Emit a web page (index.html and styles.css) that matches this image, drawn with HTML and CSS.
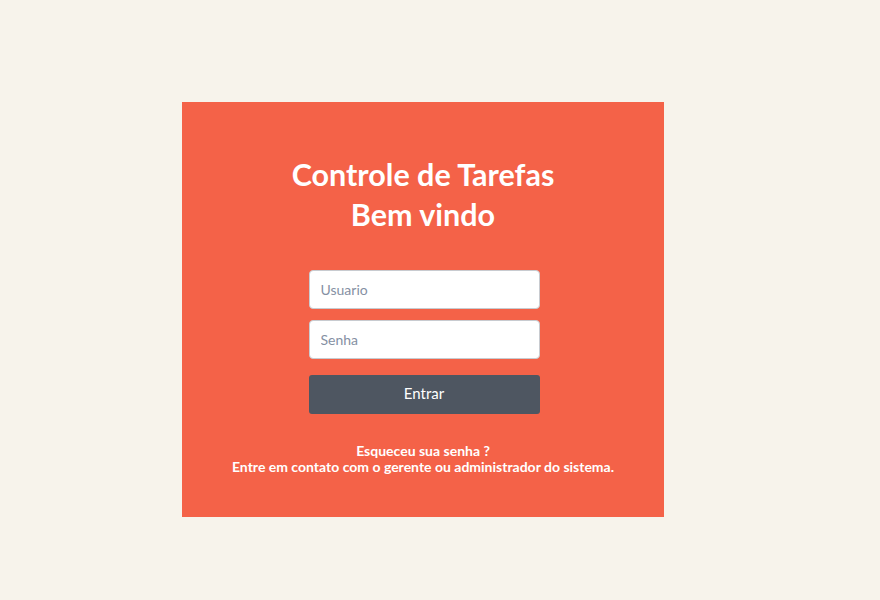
FILE: index.html
```html
<!DOCTYPE html>
<html lang="pt">
<head>
<meta charset="utf-8">
<title>Controle de Tarefas</title>
<link rel="stylesheet" href="styles.css">
</head>
<body>
<div class="page">
  <div class="panel">
    <h1 class="title">Controle de Tarefas<br>Bem vindo</h1>
    <form class="form">
      <input class="field" type="text" placeholder="Usuario">
      <input class="field" type="password" placeholder="Senha">
      <button class="btn" type="button">Entrar</button>
    </form>
    <p class="help">Esqueceu sua senha ?<br>Entre em contato com o gerente ou administrador do sistema.</p>
  </div>
</div>
</body>
</html>
```
FILE: styles.css
```css
html, body {
  margin: 0;
  padding: 0;
  background: #f7f3eb;
  font-family: Lato, "Open Sans", sans-serif;
}
.page {
  padding: 102px 0 0 182px;
}
.panel {
  width: 482px;
  height: 415px;
  box-sizing: border-box;
  background: #f46248;
  padding-top: 52px;
  display: flex;
  flex-direction: column;
  align-items: center;
}
.title {
  margin: 0;
  color: #fff;
  font-size: 30.5px;
  line-height: 40px;
  font-weight: 700;
  text-align: center;
}
.form {
  margin: 36px 0 0 2px;
  width: 231px;
  display: flex;
  flex-direction: column;
}
.field {
  box-sizing: border-box;
  width: 231px;
  height: 39px;
  border: 1px solid #c8cbd0;
  border-radius: 4px;
  background: #fff;
  padding: 0 11px;
  font-family: Lato, sans-serif;
  font-size: 14px;
  color: #333;
  margin: 0 0 11px 0;
}
.field::placeholder {
  color: #8590a3;
}
.field + .field {
  margin-bottom: 16px;
}
.btn {
  box-sizing: border-box;
  width: 231px;
  height: 39px;
  border: none;
  border-radius: 3px;
  background: #4e5661;
  color: #fff;
  font-family: Lato, sans-serif;
  font-size: 15px;
  font-weight: 400;
  padding: 0 0 3px 0;
  cursor: pointer;
}
.help {
  margin: 29px 0 0 0;
  color: #fff;
  font-size: 14px;
  line-height: 16px;
  font-weight: 700;
  text-align: center;
}
```
